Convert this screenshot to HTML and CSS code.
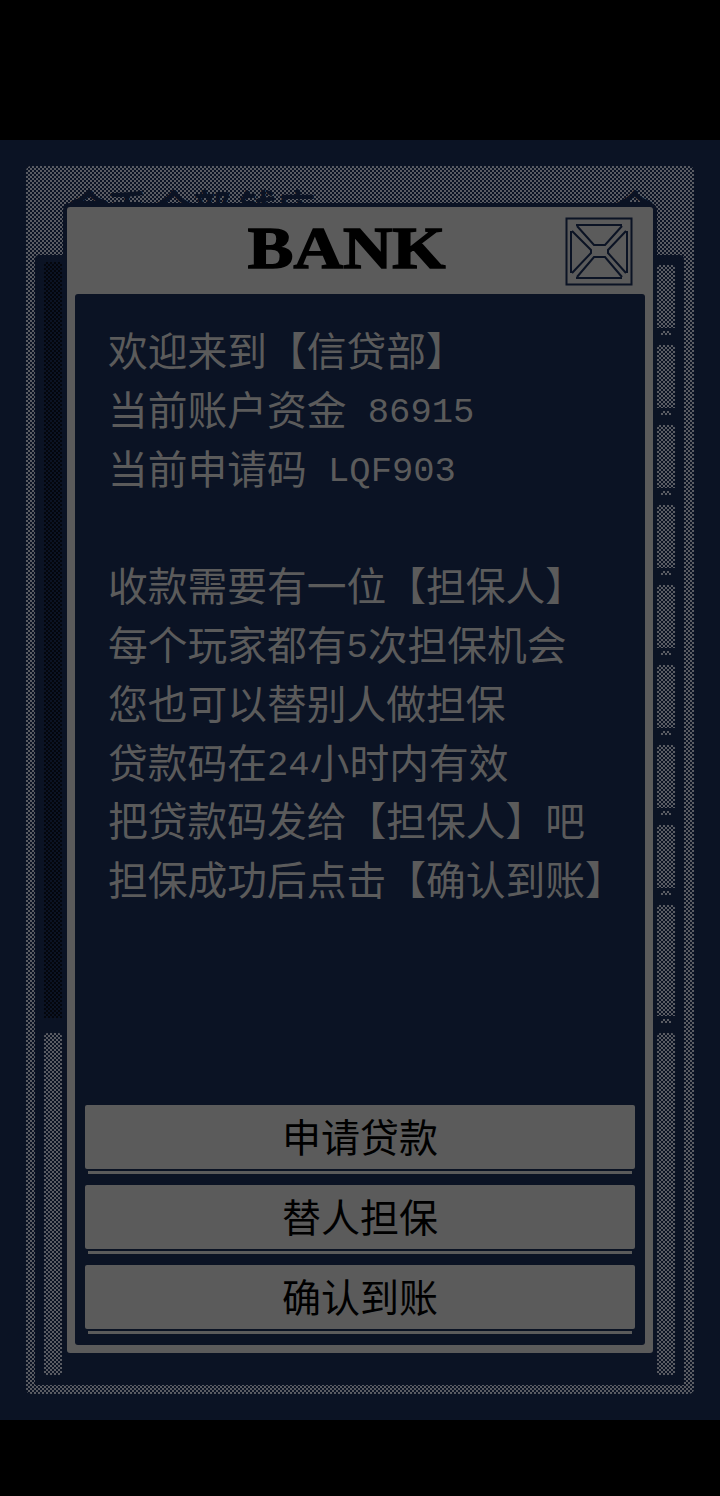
FILE: index.html
```html
<!DOCTYPE html>
<html lang="zh">
<head>
    <meta charset="UTF-8">
    <meta name="viewport" content="width=device-width, initial-scale=1.0">
    <title>BANK</title>
    <link rel="stylesheet" href="styles.css">
</head>
<body>
    <div class="stage">
        <div class="window">
            <!-- Game window underneath the dialog -->
            <div class="window-head">
                <span>金币 全部 钱庄</span>
                <span>合</span>
            </div>
            <div class="window-body">
                <div class="side">
                    <div class="track"></div>
                    <div class="dither-block"></div>
                </div>
                <div class="side side-right">
                    <div class="seg"></div>
                    <div class="seg"></div>
                    <div class="seg"></div>
                    <div class="seg"></div>
                    <div class="seg"></div>
                    <div class="seg"></div>
                    <div class="seg"></div>
                    <div class="seg"></div>
                    <div class="seg seg-tall"></div>
                    <div class="dither-block"></div>
                </div>
            </div>

            <!-- Bank dialog -->
            <div class="dialog">
                <div class="dialog-head">
                    <h1 class="dialog-title"><span>BANK</span></h1>
                    <button class="close-button" aria-label="关闭">
                        <svg width="68" height="69" viewBox="0 0 68 69" fill="none" stroke="#0b1324" stroke-width="2">
                            <rect x="1.5" y="1.5" width="65" height="66"/>
                            <path d="M11 8H57M12 9L29 28H40L57 9"/>
                            <path d="M11 61H57M12 60L29 40H40L57 60"/>
                            <path d="M6 14V56M7 14L26 33V36L7 56"/>
                            <path d="M62 14V56M61 14L43 33V36L61 56"/>
                        </svg>
                    </button>
                </div>
                <div class="dialog-panel">
                    <div class="intro">
                        <div>欢迎来到【信贷部】</div>
                        <div>当前账户资金<span class="latin"> 86915</span></div>
                        <div>当前申请码<span class="latin"> LQF903</span></div>
                        <div>&nbsp;</div>
                        <div>收款需要有一位【担保人】</div>
                        <div>每个玩家都有<span class="latin">5</span>次担保机会</div>
                        <div>您也可以替别人做担保</div>
                        <div>贷款码在<span class="latin">24</span>小时内有效</div>
                        <div>把贷款码发给【担保人】吧</div>
                        <div>担保成功后点击【确认到账】</div>
                    </div>
                    <div class="actions">
                        <div class="action"><button class="action-button">申请贷款</button></div>
                        <div class="action"><button class="action-button">替人担保</button></div>
                        <div class="action"><button class="action-button">确认到账</button></div>
                    </div>
                </div>
            </div>
        </div>
    </div>
</body>
</html>
```

FILE: styles.css
```css
* {
    margin: 0;
    padding: 0;
    box-sizing: border-box;
}

:root {
    --navy: #0b1324;
    --grey: #5b5b5b;
    --dither: repeating-conic-gradient(#5a5c63 0 25%, #0b1324 0 50%) 0 0 / 4px 4px;
}

body {
    background-color: #000;
    font-family: "Noto Sans CJK SC", "Liberation Sans", sans-serif;
}

.stage {
    margin-top: 140px;
    height: 1280px;
    padding: 26px 26px 0;
    background-color: var(--navy);
}

.window {
    position: relative;
    height: 1228px;
    padding: 0 10px 9px 9px;
    background: var(--dither);
    border-radius: 5px;
    display: flex;
    flex-direction: column;
}

.window-head {
    flex: none;
    height: 89px;
    padding: 12px 31px 0 35px;
    display: flex;
    justify-content: space-between;
    font-size: 38px;
    font-weight: bold;
    line-height: 56px;
    color: var(--navy);
    overflow: hidden;
}

.window-body {
    flex: 1;
    padding: 7px 9px 10px;
    background-color: var(--navy);
    border-radius: 4px 4px 0 0;
    display: flex;
    justify-content: space-between;
}

.side {
    width: 18px;
    display: flex;
    flex-direction: column;
}

.side-right {
    padding-top: 3px;
}

.track {
    height: 756px;
    margin-bottom: 15px;
    background: repeating-conic-gradient(#04060c 0 25%, #0b1324 0 50%) 0 0 / 4px 4px;
}

.dither-block {
    flex: 1;
    background: var(--dither);
    border-radius: 4px 4px 0 0;
}

.seg {
    flex: none;
    height: 80px;
}

.seg::before {
    content: "";
    display: block;
    height: 63px;
    background: var(--dither);
    border-radius: 3px 3px 0 0;
}

.seg::after {
    content: "";
    display: block;
    width: 10px;
    height: 4px;
    margin: 3px auto 0;
    background: var(--dither);
}

.seg-tall {
    height: 128px;
}

.seg-tall::before {
    height: 111px;
}

.dialog {
    position: absolute;
    top: 41px;
    left: 41px;
    width: 586px;
    height: 1146px;
    padding: 0 8px 8px;
    background-color: var(--grey);
    border-radius: 3px;
    box-shadow: 0 0 0 4px var(--navy);
    display: flex;
    flex-direction: column;
}

.dialog-head {
    flex: none;
    height: 87px;
    padding: 10px 12px 0 53px;
    display: flex;
    align-items: flex-start;
}

.dialog-title {
    flex: 1;
    font-family: "Liberation Serif", serif;
    font-size: 60px;
    font-weight: bold;
    line-height: 62px;
    text-align: center;
    color: #000;
}

.dialog-title span {
    display: inline-block;
    transform: scaleX(1.14);
    -webkit-text-stroke: 1.5px #000;
}

.close-button {
    width: 68px;
    height: 69px;
    background: none;
    border: none;
    display: block;
}

.dialog-panel {
    flex: 1;
    min-height: 0;
    padding: 26px 10px 0;
    background-color: var(--navy);
    border-radius: 3px;
    display: flex;
    flex-direction: column;
}

.intro {
    padding-left: 23px;
    font-size: 39.75px;
    line-height: 58.8px;
    white-space: nowrap;
    color: var(--grey);
}

.intro > div {
    height: 58.8px;
}

.latin {
    position: relative;
    top: -3px;
    font-family: "Liberation Mono", monospace;
    font-size: 35.5px;
}

.actions {
    margin-top: auto;
}

.action {
    padding-bottom: 11px;
}

.action::after {
    content: "";
    display: block;
    height: 3px;
    margin: 2px 3px 0;
    background-color: var(--grey);
}

.action-button {
    display: block;
    width: 100%;
    height: 64px;
    padding-bottom: 4px;
    background-color: var(--grey);
    border: none;
    border-radius: 2px;
    font-family: "Noto Sans CJK SC", sans-serif;
    font-size: 39px;
    line-height: 60px;
    color: #000;
}
```
